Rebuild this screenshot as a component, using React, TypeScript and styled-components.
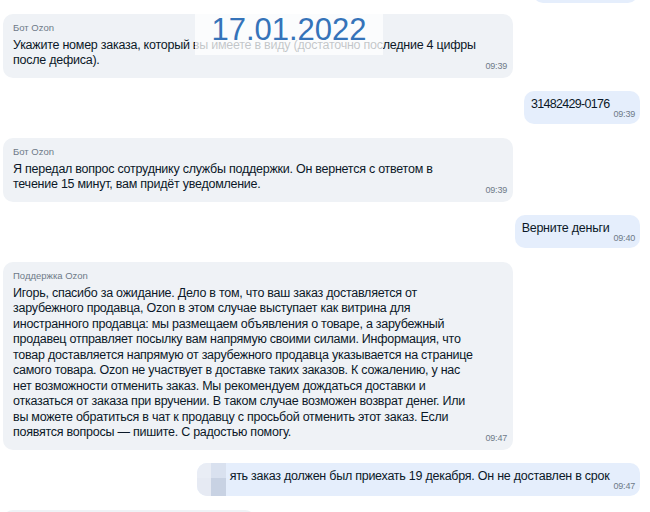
import React from 'react';
import styled, { createGlobalStyle } from 'styled-components';

const GlobalStyle = createGlobalStyle`
  html, body {
    margin: 0;
    padding: 0;
    background: #ffffff;
    overflow: hidden;
  }
  body {
    font-family: 'Liberation Sans', Arial, sans-serif;
    -webkit-font-smoothing: antialiased;
  }
`;

const Screen = styled.div`
  position: relative;
  width: 650px;
  height: 512px;
  overflow: hidden;
`;

// message list, scrolled so the previous message is just cut off at the top
const Feed = styled.div`
  display: flex;
  flex-direction: column;
  gap: 13.5px;
  padding: 0 10px 0 3px;
`;

const Row = styled.div<{ $out?: boolean }>`
  display: flex;
  justify-content: ${(p) => (p.$out ? 'flex-end' : 'flex-start')};
`;

const InBubble = styled.div<{ $width?: number; $height?: number }>`
  width: ${(p) => p.$width ?? 510}px;
  ${(p) => (p.$height ? `height: ${p.$height}px;` : '')}
  box-sizing: border-box;
  padding: 8px 6px 6px 10px;
  background: #eff2f6;
  border-radius: 10px;
`;

const Sender = styled.div`
  font-size: 9.5px;
  line-height: 12px;
  color: #6e7a88;
  margin-bottom: 4px;
`;

const Line = styled.div`
  font-size: 12.5px;
  letter-spacing: -0.25px;
  line-height: 15.5px;
  color: #0b1828;
  white-space: nowrap;
`;

const InTime = styled.div`
  display: flex;
  justify-content: flex-end;
  margin-top: -9px;
  font-size: 9px;
  line-height: 12px;
  letter-spacing: -0.2px;
  color: #6e7a88;
`;

const OutBubble = styled.div`
  display: flex;
  align-items: flex-end;
  gap: 4px;
  overflow: hidden;
  padding: 5px 5px 4px 7px;
  background: #e5eefc;
  border-radius: 10px;
`;

const OutText = styled.span<{ $tight?: boolean }>`
  font-size: 12.5px;
  letter-spacing: ${(p) => (p.$tight ? '-0.7px' : '-0.25px')};
  line-height: 17px;
  color: #0b1828;
  margin-bottom: 7px;
  white-space: nowrap;
`;

const OutTime = styled.span`
  font-size: 9px;
  line-height: 12px;
  letter-spacing: -0.2px;
  color: #6e7a88;
`;

const Fragment = styled.div`
  width: 105px;
  height: 30px;
  margin-top: -27px;
  margin-bottom: -3px;
  margin-right: 2px;
  background: #e5eefc;
  border-radius: 10px;
`;

// pixelated patch hiding the start of the message
const Censor = styled.div`
  display: grid;
  grid-template-columns: 14px 15px;
  grid-template-rows: 15px 18px;
  align-self: stretch;
  margin: -5px 0 -4px -7px;
`;

const CensorCell = styled.div<{ $c: string }>`
  background: ${(p) => p.$c};
`;

const DateStamp = styled.div`
  position: absolute;
  left: 195px;
  top: 13px;
  width: 188px;
  height: 42px;
  box-sizing: border-box;
  padding-top: 1px;
  background: rgba(255, 255, 255, 0.75);
  font-family: 'Liberation Sans', Arial, sans-serif;
  font-size: 31px;
  line-height: 31px;
  color: #3573b9;
  text-align: center;
`;

const Incoming: React.FC<{ from: string; time: string; lines: string[] }> = ({
  from,
  time,
  lines,
}) => (
  <Row>
    <InBubble>
      <Sender>{from}</Sender>
      {lines.map((l, i) => (
        <Line key={i}>{l}</Line>
      ))}
      <InTime>{time}</InTime>
    </InBubble>
  </Row>
);

const Outgoing: React.FC<{
  time: string;
  censored?: boolean;
  tight?: boolean;
  children: React.ReactNode;
}> = ({ time, censored, tight, children }) => (
  <Row $out>
    <OutBubble>
      {censored && (
        <Censor>
          <CensorCell $c="#e9edf5" />
          <CensorCell $c="#d9e1ef" />
          <CensorCell $c="#e6eaf3" />
          <CensorCell $c="#c8d2e3" />
        </Censor>
      )}
      <OutText $tight={tight}>{children}</OutText>
      <OutTime>{time}</OutTime>
    </OutBubble>
  </Row>
);

const support = [
  'Игорь, спасибо за ожидание. Дело в том, что ваш заказ доставляется от',
  'зарубежного продавца, Ozon в этом случае выступает как витрина для',
  'иностранного продавца: мы размещаем объявления о товаре, а зарубежный',
  'продавец отправляет посылку вам напрямую своими силами. Информация, что',
  'товар доставляется напрямую от зарубежного продавца указывается на странице',
  'самого товара. Ozon не участвует в доставке таких заказов. К сожалению, у нас',
  'нет возможности отменить заказ. Мы рекомендуем дождаться доставки и',
  'отказаться от заказа при вручении. В таком случае возможен возврат денег. Или',
  'вы можете обратиться в чат к продавцу с просьбой отменить этот заказ. Если',
  'появятся вопросы — пишите. С радостью помогу.',
];

export default function App() {
  return (
    <Screen>
      <GlobalStyle />
      <Feed>
        <Row $out>
          <Fragment />
        </Row>

        <Incoming
          from="Бот Ozon"
          time="09:39"
          lines={[
            'Укажите номер заказа, который вы имеете в виду (достаточно последние 4 цифры',
            'после дефиса).',
          ]}
        />

        <Outgoing time="09:39" tight>
          31482429-0176
        </Outgoing>

        <Incoming
          from="Бот Ozon"
          time="09:39"
          lines={[
            'Я передал вопрос сотруднику службы поддержки. Он вернется с ответом в',
            'течение 15 минут, вам придёт уведомление.',
          ]}
        />

        <Outgoing time="09:40">Верните деньги</Outgoing>

        <Incoming from="Поддержка Ozon" time="09:47" lines={support} />

        <Outgoing time="09:47" censored>
          ять заказ должен был приехать 19 декабря. Он не доставлен в срок
        </Outgoing>

        <Row>
          <InBubble $width={252} $height={40} />
        </Row>
      </Feed>

      <DateStamp>17.01.2022</DateStamp>
    </Screen>
  );
}
